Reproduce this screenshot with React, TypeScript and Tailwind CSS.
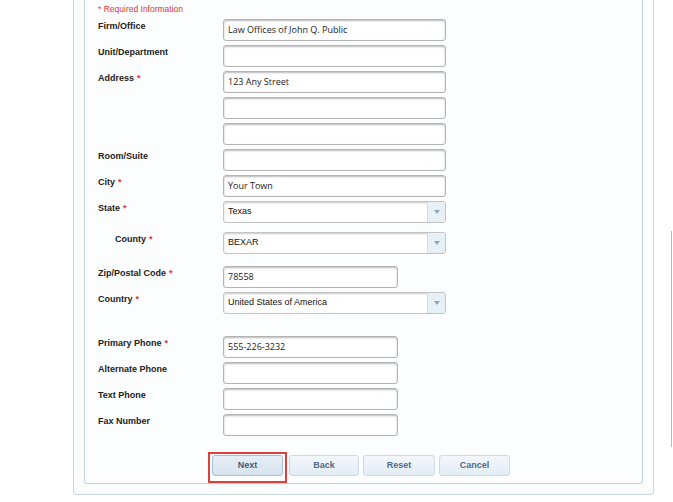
import React from "react";

type Row = {
  label?: string;
  req?: boolean;
  value?: string;
  kind?: "text" | "select";
  narrow?: boolean;
  indent?: boolean;
  mt: string;
};

// mt values are the gap above each row's field
const ROWS: Row[] = [
  { label: "Firm/Office", value: "Law Offices of John Q. Public", mt: "mt-[4px]" },
  { label: "Unit/Department", mt: "mt-[4px]" },
  { label: "Address", req: true, value: "123 Any Street", mt: "mt-[4px]" },
  { mt: "mt-[4px]" },
  { mt: "mt-[4px]" },
  { label: "Room/Suite", mt: "mt-[4px]" },
  { label: "City", req: true, value: "Your Town", mt: "mt-[4px]" },
  { label: "State", req: true, value: "Texas", kind: "select", mt: "mt-[4px]" },
  { label: "County", req: true, value: "BEXAR", kind: "select", indent: true, mt: "mt-[9px]" },
  { label: "Zip/Postal Code", req: true, value: "78558", narrow: true, mt: "mt-[12px]" },
  { label: "Country", req: true, value: "United States of America", kind: "select", mt: "mt-[4px]" },
  { label: "Primary Phone", req: true, value: "555-226-3232", narrow: true, mt: "mt-[22px]" },
  { label: "Alternate Phone", narrow: true, mt: "mt-[4px]" },
  { label: "Text Phone", narrow: true, mt: "mt-[4px]" },
  { label: "Fax Number", narrow: true, mt: "mt-[4px]" },
];

const sans = "font-['Liberation_Sans',Arial,sans-serif]";

function Field({ row }: { row: Row }) {
  if (row.kind === "select") {
    return (
      <div className="flex h-[22px] w-[223px] overflow-hidden rounded-[3px] border border-[#c4c4c4] bg-white shadow-[inset_0_1px_2px_rgba(0,0,0,0.22)]">
        <div className={`flex flex-1 items-center pl-[4px] text-[9px] text-[#111] ${sans}`}>
          {row.value}
        </div>
        <div className="flex w-[18px] items-center justify-center border-l border-[#d2dce4] bg-[#e7f0f7]">
          <svg width="6" height="4" viewBox="0 0 6 4">
            <path d="M0 0 L6 0 L3 4 Z" fill="#8da5ba" />
          </svg>
        </div>
      </div>
    );
  }
  return (
    <div
      className={`flex h-[22px] items-center rounded-[3px] border border-[#b4b4b4] bg-white pl-[4px] text-[9px] text-[#222] shadow-[inset_0_1px_2px_rgba(0,0,0,0.28)] font-['Open_Sans',sans-serif] ${
        row.narrow ? "w-[175px]" : "w-[223px]"
      }`}
    >
      {row.value}
    </div>
  );
}

function Btn({ label, w, strong }: { label: string; w: string; strong?: boolean }) {
  return (
    <button
      className={`block h-[21px] ${w} rounded-[3px] border text-[9px] font-bold ${sans} ${
        strong
          ? "border-[#a9bfd2] bg-gradient-to-b from-[#e6eef6] to-[#d6e3ee] text-[#3e5d7c]"
          : "border-[#cbdae6] bg-gradient-to-b from-[#f3f7fb] to-[#e3ecf4] text-[#4d6c8b]"
      }`}
    >
      {label}
    </button>
  );
}

export default function App() {
  return (
    <div className="flex h-[502px] w-[673px] overflow-hidden bg-white">
      {/* outer panel, top cut off by scroll */}
      <div className="ml-[73px] h-[495px] w-[581px] rounded-b-[4px] border border-t-0 border-[#c9d7de] bg-[#fbfdfd] px-[10px]">
        <div className="h-[484px] w-[559px] rounded-b-[3px] border border-t-0 border-[#c3d3db] bg-[#fbfdfe] pl-[13px]">
          <div className={`pt-[3px] text-[8.5px] leading-[12px] text-[#e2323a] ${sans}`}>
            * Required Information
          </div>
          {ROWS.map((row, i) => (
            <div key={i} className={`flex ${row.mt}`}>
              <div
                className={`w-[125px] pt-[1px] text-[9px] font-bold leading-[12px] text-[#222] ${sans} ${
                  row.indent ? "pl-[17px]" : ""
                }`}
              >
                {row.label}
                {row.req && <span className="ml-[3px] text-[#e2323a]">*</span>}
              </div>
              <Field row={row} />
            </div>
          ))}
          <div className="mt-[16px] ml-[110px] flex items-start">
            <div className="flex border-2 border-[#e0403a] px-[2px] pt-[1px] pb-[5px]">
              <Btn label="Next" w="w-[71px]" strong />
            </div>
            <div className="ml-[2px] mt-[3px] flex gap-[4px]">
              <Btn label="Back" w="w-[70px]" />
              <Btn label="Reset" w="w-[72px]" />
              <Btn label="Cancel" w="w-[71px]" />
            </div>
          </div>
        </div>
      </div>
      {/* sliver of a neighbouring scroll pane */}
      <div className="ml-[17px] mt-[231px] h-[216px] w-[2px] border-l border-[#b9b9b9]" />
    </div>
  );
}
